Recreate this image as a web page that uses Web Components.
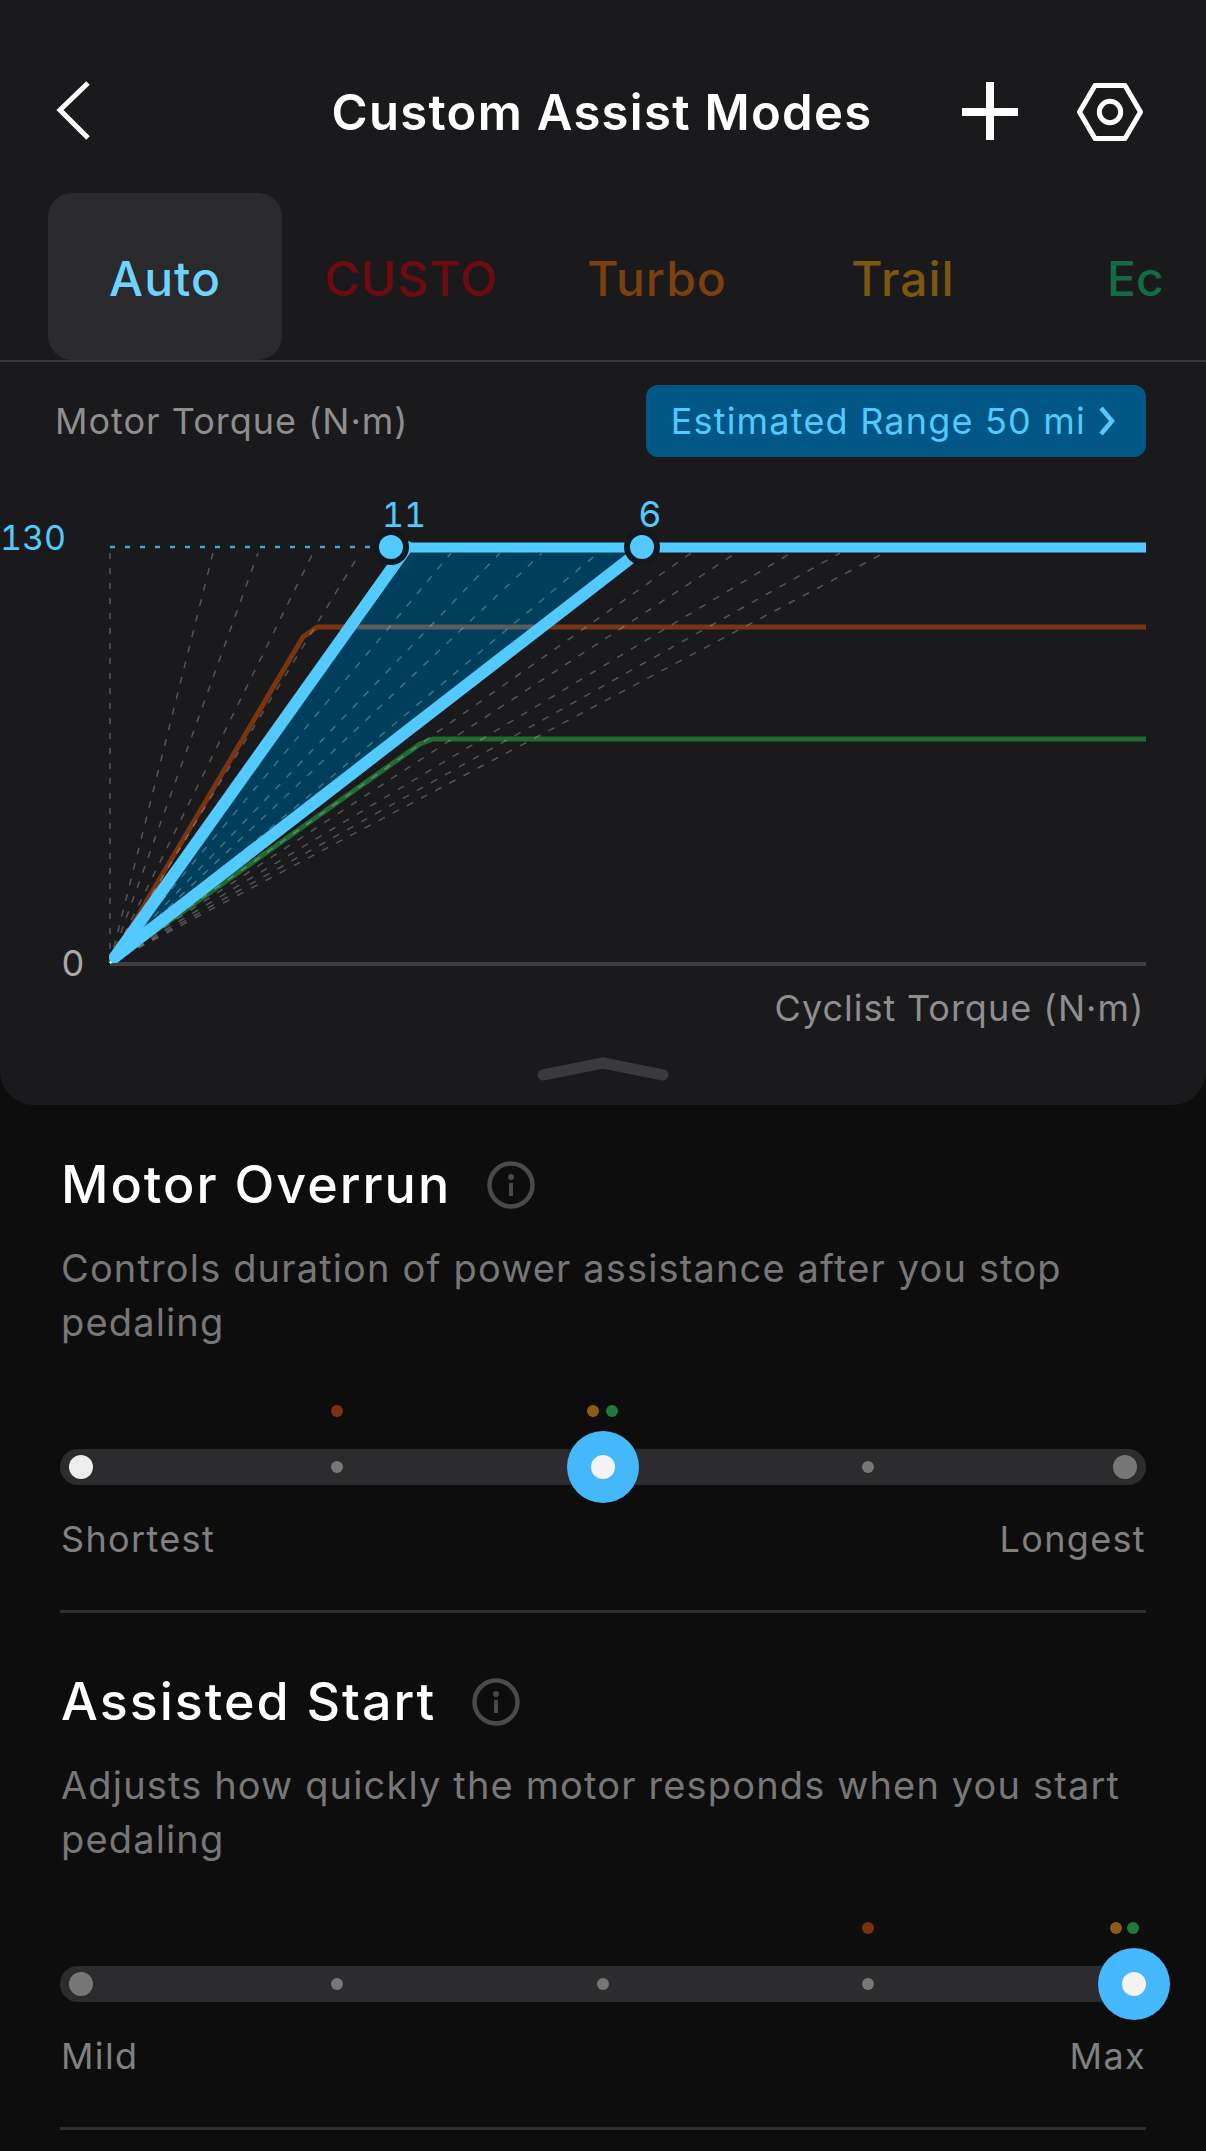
<!DOCTYPE html>
<html lang="en">
<head>
<meta charset="utf-8">
<title>Custom Assist Modes</title>
<style>
  html, body { margin: 0; background: #0d0d0d; }
  body { width: 1206px; height: 2151px; overflow: hidden; font-family: Inter, "Liberation Sans", sans-serif; }
</style>
</head>
<body>
<assist-screen>
  <assist-panel>
    <top-bar>Custom Assist Modes</top-bar>
    <mode-tabs></mode-tabs>
    <torque-chart></torque-chart>
  </assist-panel>
  <assist-setting heading="Motor Overrun" low="Shortest" high="Longest" value="543"
    marks="277:#7a3312,533:#8a5c14,552:#1f7a3c" first="#ededed" last="#777777" stops="277,808">
    Controls duration of power assistance after you stop pedaling
  </assist-setting>
  <assist-setting heading="Assisted Start" low="Mild" high="Max" value="1074"
    marks="808:#7a3312,1056:#8a5c14,1073:#1f7a3c" first="#777777" last="" stops="277,543,808">
    Adjusts how quickly the motor responds when you start pedaling
  </assist-setting>
</assist-screen>

<script>
class AssistScreen extends HTMLElement {
  constructor() {
    super();
    this.attachShadow({ mode: "open" });
    this.shadowRoot.innerHTML = `
      <style>
        :host { display: block; width: 1206px; background: #0d0d0d; }
      </style>
      <slot></slot>
    `;
  }
}

class AssistPanel extends HTMLElement {
  constructor() {
    super();
    this.attachShadow({ mode: "open" });
    this.shadowRoot.innerHTML = `
      <style>
        :host {
          display: block;
          height: 1105px;
          background: #1a1a1c;
          border-radius: 0 0 34px 34px;
          overflow: hidden;
        }
      </style>
      <slot></slot>
    `;
  }
}

class TopBar extends HTMLElement {
  constructor() {
    super();
    this.attachShadow({ mode: "open" });
    this.shadowRoot.innerHTML = `
      <style>
        :host {
          display: grid;
          grid-template-columns: 1fr auto 1fr;
          align-items: center;
          height: 60px;
          padding: 78px 62px 2px 55px;
          color: #fff;
        }
        .title { font: 600 49px/60px Inter, sans-serif; letter-spacing: 1.3px; margin: 5px 0 0 5px; }
        .actions { display: flex; justify-content: flex-end; gap: 56px; }
        svg { display: block; fill: none; stroke: #fff; }
      </style>
      <svg width="36" height="60" viewBox="0 0 36 60" stroke-width="5">
        <polyline points="33,2 5,29 33,57"></polyline>
      </svg>
      <div class="title"><slot></slot></div>
      <div class="actions">
        <svg width="60" height="60" viewBox="0 0 60 60" stroke-width="8">
          <path d="M30 1V59M2 31H58"></path>
        </svg>
        <svg width="68" height="60" viewBox="0 0 68 60" stroke-width="5" stroke-linejoin="round">
          <path d="M19 4.500H49L64.500 31L49 57.500H19L3.500 31Z"></path>
          <circle cx="34" cy="31" r="10.700"></circle>
        </svg>
      </div>
    `;
  }
}

class ModeTabs extends HTMLElement {
  constructor() {
    super();
    this.attachShadow({ mode: "open" });
    this.shadowRoot.innerHTML = `
      <style>
        :host {
          display: flex;
          gap: 12px;
          box-sizing: border-box;
          height: 169px;
          margin-top: 53px;
          padding: 0 46px 0 48px;
          border-bottom: 2px solid #3a3a3c;
          overflow: hidden;
          font: 500 48px/172px Inter, sans-serif;
          letter-spacing: 1px;
        }
        .tab { flex: 0 0 234px; text-align: center; height: 167px; }
        .on { background: #2a2a2c; border-radius: 24px; color: #6fd3ff; }
        .custom { color: #6e0a10; }
        .turbo { color: #7a4010; }
        .trail { color: #7a5810; }
        .eco {
          flex-basis: 140px;
          box-sizing: border-box;
          color: #136b45;
          text-align: left;
          padding-left: 75px;
          letter-spacing: 0;
        }
      </style>
      <div class="tab on">Auto</div>
      <div class="tab custom">CUSTO</div>
      <div class="tab turbo">Turbo</div>
      <div class="tab trail">Trail</div>
      <div class="tab eco">Ec</div>
    `;
  }
}

class TorqueChart extends HTMLElement {
  constructor() {
    super();
    this.attachShadow({ mode: "open" });
    const tops = [213, 258, 313, 360, 451, 500, 542, 598, 691, 736, 791, 840, 884];
    const fan = tops.map((x) => `<line x1="110" y1="963" x2="${x}" y2="553"></line>`).join("");
    this.shadowRoot.innerHTML = `
      <style>
        :host { display: block; position: relative; }
        .head {
          display: flex;
          justify-content: space-between;
          align-items: center;
          height: 72px;
          margin-top: 23px;
          padding: 0 60px 0 55px;
          font: 400 36px/72px Inter, sans-serif;
          letter-spacing: 1px;
          color: #8e8e8e;
        }
        .range {
          display: flex;
          align-items: center;
          gap: 12px;
          height: 72px;
          padding: 0 30px 0 25px;
          border-radius: 12px;
          background: #005685;
          color: #52c9ff;
          letter-spacing: 1.2px;
        }
        .plot { display: block; margin-top: 13px; }
        text { font: 400 34px Inter, sans-serif; font-variant-numeric: tabular-nums; fill: #52c9ff; }
        .big { font-size: 36px; }
        .grab { display: block; margin: 14px auto 0; }
      </style>
      <div class="head">
        <span>Motor Torque (N·m)</span>
        <span class="range">Estimated Range 50 mi
          <svg width="18" height="30" viewBox="0 0 18 30" fill="none" stroke="#52c9ff" stroke-width="4.5"><polyline points="3,2 14,15 3,28"></polyline></svg>
        </span>
      </div>
      <svg class="plot" width="1206" height="570" viewBox="0 470 1206 570" fill="none">
        <line x1="110" y1="964" x2="1146" y2="964" stroke="#3f3f41" stroke-width="4"></line>
        <polyline points="110,963 303,637 317,627 1146,627" stroke="#7a3410" stroke-width="5"></polyline>
        <polyline points="110,963 420,744 433,739 1146,739" stroke="#1f6b32" stroke-width="5"></polyline>
        <polygon points="114,957 407,547 645,547" fill="#003f5c"></polygon>
        <line x1="353" y1="627" x2="540" y2="627" stroke="#5c5c5a" stroke-width="5"></line>
        <line x1="110" y1="553" x2="110" y2="960" stroke="#fff" stroke-opacity=".25" stroke-width="1.6" stroke-dasharray="6 9"></line>
        <g stroke="#fff" stroke-opacity=".26" stroke-width="1.5" stroke-dasharray="7 9">${fan}</g>
        <line x1="110" y1="547" x2="376" y2="547" stroke="#52c9ff" stroke-opacity=".8" stroke-width="2.5" stroke-dasharray="5 10"></line>
        <line x1="407" y1="547.500" x2="1146" y2="547.500" stroke="#52c9ff" stroke-width="10"></line>
        <g stroke="#52c9ff" stroke-width="12" stroke-linecap="round">
          <line x1="115" y1="957" x2="407" y2="547"></line>
          <line x1="115" y1="957" x2="645" y2="547"></line>
        </g>
        <circle cx="391" cy="547" r="15" fill="#52c9ff" stroke="#12181d" stroke-width="6"></circle>
        <circle cx="642" cy="547" r="15" fill="#52c9ff" stroke="#12181d" stroke-width="6"></circle>
        <text x="404" y="527" text-anchor="middle">11</text>
        <text class="big" x="650" y="527" text-anchor="middle">6</text>
        <text x="0" y="550">130</text>
        <text class="big" x="73" y="976" text-anchor="middle" style="fill:#a8a8a8">0</text>
        <text class="big" x="1145" y="1021" text-anchor="end" style="fill:#8e8e8e;letter-spacing:1px">Cyclist Torque (N·m)</text>
      </svg>
      <svg class="grab" width="140" height="28" viewBox="0 0 140 28" fill="none" stroke="#3a3a3c" stroke-width="11" stroke-linecap="round" stroke-linejoin="round">
        <path d="M10 21L70 9L130 21"></path>
      </svg>
    `;
  }
}

class AssistSetting extends HTMLElement {
  constructor() {
    super();
    this.attachShadow({ mode: "open" });
    const value = Number(this.getAttribute("value"));
    const marks = this.getAttribute("marks").split(",").map((m) => {
      const [x, color] = m.split(":");
      return `<i class="mark" style="left:${x}px;background:${color}"></i>`;
    }).join("");
    const stops = this.getAttribute("stops").split(",")
      .map((x) => `<i class="stop" style="left:${x}px"></i>`).join("");
    const first = this.getAttribute("first");
    const last = this.getAttribute("last");
    this.shadowRoot.innerHTML = `
      <style>
        :host { display: block; padding: 50px 60px 0; }
        :host(:not(:first-of-type)) { padding-top: 59px; }
        .head {
          display: flex;
          align-items: center;
          gap: 36px;
          height: 60px;
          font: 500 52px/60px Inter, sans-serif;
          letter-spacing: 2px;
          color: #fff;
          padding-left: 1px;
        }
        .desc {
          margin: 26px 0 0 1px;
          font: 400 38px/54px Inter, sans-serif;
          letter-spacing: 1.15px;
          color: #777;
        }
        .marks { position: relative; height: 12px; margin-top: 56px; }
        .track { position: relative; height: 36px; margin-top: 32px; border-radius: 18px; background: #2c2c2e; }
        i { position: absolute; border-radius: 50%; transform: translate(-50%, -50%); }
        .mark { top: 6px; width: 12px; height: 12px; }
        .stop { top: 18px; width: 12px; height: 12px; background: #777; }
        .end { top: 18px; width: 24px; height: 24px; }
        .thumb { top: 18px; width: 72px; height: 72px; background: #45b8fb; }
        .thumb::after {
          content: "";
          position: absolute;
          left: 24px;
          top: 24px;
          width: 24px;
          height: 24px;
          border-radius: 50%;
          background: #f4f4f4;
        }
        .ends {
          display: flex;
          justify-content: space-between;
          margin: 32px 0 0 1px;
          font: 400 36px/44px Inter, sans-serif;
          letter-spacing: 1.35px;
          color: #808080;
        }
        .rule { height: 3px; margin-top: 49px; background: #2f2f31; }
      </style>
      <div class="head">
        <span>${this.getAttribute("heading")}</span>
        <svg width="48" height="48" viewBox="0 0 48 48" fill="none" stroke="#4a4a4a" stroke-width="4.500">
          <circle cx="24" cy="24" r="21.500"></circle>
          <path d="M24 22V35" stroke-width="4"></path>
          <circle cx="24" cy="16" r="3" fill="#4a4a4a" stroke="none"></circle>
        </svg>
      </div>
      <div class="desc"><slot></slot></div>
      <div class="marks">${marks}</div>
      <div class="track">
        <i class="end" style="left:21px;background:${first}"></i>
        ${stops}
        ${last ? `<i class="end" style="left:1065px;background:${last}"></i>` : ""}
        <i class="thumb" style="left:${value}px"></i>
      </div>
      <div class="ends"><span>${this.getAttribute("low")}</span><span>${this.getAttribute("high")}</span></div>
      <div class="rule"></div>
    `;
  }
}

customElements.define("assist-screen", AssistScreen);
customElements.define("assist-panel", AssistPanel);
customElements.define("top-bar", TopBar);
customElements.define("mode-tabs", ModeTabs);
customElements.define("torque-chart", TorqueChart);
customElements.define("assist-setting", AssistSetting);
</script>
</body>
</html>
